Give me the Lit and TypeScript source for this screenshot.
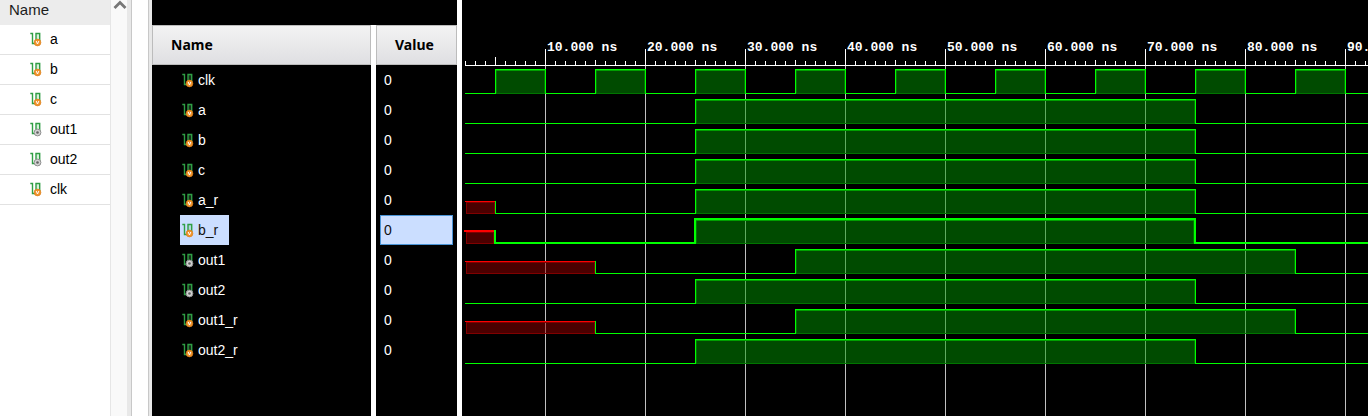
import { LitElement, html, svg, css } from "lit";
import { customElement, property, state } from "lit/decorators.js";

type Kind = "reg" | "out";
interface Pulse { from: number; to: number; }
interface Signal {
  name: string;
  kind: Kind;
  value: string;
  high: Pulse[];
  unknownUntil?: number;
  selected?: boolean;
}

const NS = 10; // pixels per nanosecond
const ORIGIN = -17; // x of time zero inside the wave pane
const START = 3; // x where traces begin
const ROW = 30;
const AXIS = 65;

const early: Pulse[] = [{ from: 25, to: 75 }];
const late: Pulse[] = [{ from: 35, to: 85 }];

const clock = (end: number): Pulse[] => {
  const pulses: Pulse[] = [];
  for (let t = 5; t <= end; t += 10) pulses.push({ from: t, to: t + 5 });
  return pulses;
};

const SIGNALS: Signal[] = [
  { name: "clk", kind: "reg", value: "0", high: [] },
  { name: "a", kind: "reg", value: "0", high: early },
  { name: "b", kind: "reg", value: "0", high: early },
  { name: "c", kind: "reg", value: "0", high: early },
  { name: "a_r", kind: "reg", value: "0", high: early, unknownUntil: 5 },
  { name: "b_r", kind: "reg", value: "0", high: early, unknownUntil: 5, selected: true },
  { name: "out1", kind: "out", value: "0", high: late, unknownUntil: 15 },
  { name: "out2", kind: "out", value: "0", high: early },
  { name: "out1_r", kind: "reg", value: "0", high: late, unknownUntil: 15 },
  { name: "out2_r", kind: "reg", value: "0", high: early },
];

const OBJECTS: { name: string; kind: Kind }[] = [
  { name: "a", kind: "reg" },
  { name: "b", kind: "reg" },
  { name: "c", kind: "reg" },
  { name: "out1", kind: "out" },
  { name: "out2", kind: "out" },
  { name: "clk", kind: "reg" },
];

const timeX = (t: number) => ORIGIN + t * NS;

@customElement("signal-icon")
export class SignalIcon extends LitElement {
  @property() kind: Kind = "reg";

  static styles = css`
    :host { display: block; width: 12px; height: 15px; flex: none; }
    svg { display: block; }
    .wire { fill: none; stroke: #2f9e44; stroke-width: 1.4; }
    .tint { fill: #5fbf70; fill-opacity: 0.25; }
    .reg { fill: #f0932b; stroke: #d87a16; stroke-width: 0.6; }
    .vee { fill: none; stroke: #fff; stroke-width: 1; }
    .out { fill: #d2d2d2; stroke: #909090; stroke-width: 1; }
    .dot { fill: #606060; }
  `;

  render() {
    return html`<svg width="12" height="15" viewBox="0 0 12 15" aria-hidden="true">
      <rect class="tint" x="6" y="1" width="4" height="9"></rect>
      <path class="wire" d="M0.3 1.5H2.5V11.5H6V1.5H9.7V9"></path>
      ${this.kind === "reg"
        ? svg`<circle class="reg" cx="7.5" cy="10.5" r="3.4"></circle>
              <path class="vee" d="M6.2 9L7.5 12L8.8 9"></path>`
        : svg`<circle class="out" cx="7.5" cy="10.5" r="3.4"></circle>
              <circle class="dot" cx="7.5" cy="10.5" r="1.3"></circle>`}
    </svg>`;
  }
}

@customElement("objects-panel")
export class ObjectsPanel extends LitElement {
  static styles = css`
    :host { display: flex; flex: none; width: 132px; box-sizing: border-box; border-right: 1px solid #c8c8c8; background: #fff; }
    table { width: 110px; border-collapse: collapse; align-self: flex-start; }
    th, td { padding: 0; text-align: left; font-weight: normal; }
    th { height: 25px; box-sizing: border-box; padding: 0 0 5px 9px; background: #ececec; font-size: 15px; line-height: 20px; color: #1c1c1c; }
    .cell { display: flex; gap: 8px; align-items: center; height: 29px; box-sizing: border-box; padding: 0 0 1px 30px; }
    td { border-bottom: 1px solid #e2e2e2; }
    .track { width: 17px; box-sizing: border-box; border-left: 1px solid #e6e6e6; background: #f9f9f9; }
    .edge { width: 4px; background: #e8e8e8; }
    .up { display: block; width: 16px; height: 16px; padding: 0; border: 0; background: none; }
    .up svg { display: block; }
    .up path { fill: none; stroke: #777; stroke-width: 2.8; }
  `;

  render() {
    return html`
      <table>
        <thead><tr><th scope="col">Name</th></tr></thead>
        <tbody>
          ${OBJECTS.map((o) => html`<tr><td><div class="cell"><signal-icon .kind=${o.kind}></signal-icon>${o.name}</div></td></tr>`)}
        </tbody>
      </table>
      <div class="track">
        <button class="up" aria-label="Scroll up">
          <svg width="16" height="16" viewBox="0 0 16 16"><path d="M3.5 8L9 2.5L14.5 8"></path></svg>
        </button>
      </div>
      <div class="edge"></div>
    `;
  }
}

@customElement("signal-table")
export class SignalTable extends LitElement {
  static styles = css`
    :host { display: block; flex: none; width: 305px; box-sizing: border-box; padding-top: 25px; background: #000; color: #fff; }
    table { width: 100%; height: 100%; border-collapse: separate; border-spacing: 0; table-layout: fixed; }
    th, td { padding: 0; text-align: left; }
    .name { width: 219px; border-right: 5px solid #fff; }
    .head { height: 40px; box-sizing: border-box; border: 1px solid #bcbcbc; padding-left: 18px;
      background: linear-gradient(#f3f3f3, #dfdfe2); color: #000; font: bold 14px/38px "Noto Sans", "Open Sans", sans-serif; }
    .row { height: 30px; }
    .label { display: flex; gap: 4px; align-items: center; width: max-content; height: 30px; margin-left: 28px; padding: 0 11px 0 2px; }
    .value { height: 30px; box-sizing: border-box; margin: 0 4px; padding-left: 4px; line-height: 30px; }
    .selected .label { background: #cbdeff; color: #111; }
    .selected .value { border: 1px solid #4a94d6; padding-left: 3px; line-height: 28px; background: #cbdeff; color: #111; }
  `;

  render() {
    return html`<table>
      <thead>
        <tr>
          <th class="name" scope="col"><div class="head">Name</div></th>
          <th scope="col"><div class="head">Value</div></th>
        </tr>
      </thead>
      <tbody>
        ${SIGNALS.map((s) => html`<tr class=${s.selected ? "row selected" : "row"}>
          <td class="name"><div class="label"><signal-icon .kind=${s.kind}></signal-icon>${s.name}</div></td>
          <td><div class="value">${s.value}</div></td>
        </tr>`)}
        <tr><td class="name"></td><td></td></tr>
      </tbody>
    </table>`;
  }
}

@customElement("wave-view")
export class WaveView extends LitElement {
  @state() private end = 90;
  private observer?: ResizeObserver;

  static styles = css`
    :host { display: block; flex: 1; min-width: 0; overflow: hidden; background: #000; border-left: 5px solid #fff; }
    svg { display: block; width: 100%; height: 100%; shape-rendering: crispEdges; }
    .axis { fill: #fff; }
    .grid { fill: #c0c0c0; }
    .time { fill: #fff; font: bold 13px "Liberation Mono", monospace; }
    .fill { fill: #009600; fill-opacity: 0.5; }
    .shade { fill: #00a000; }
    .rim { fill: #007a00; fill-opacity: 0.9; }
    .on { fill: #00ff00; }
    .bad { fill: #960000; fill-opacity: 0.5; }
    .badrim { fill: #800000; }
    .badtop { fill: #ff0000; }
  `;

  connectedCallback() {
    super.connectedCallback();
    this.observer = new ResizeObserver(() => {
      this.end = Math.floor((this.clientWidth - ORIGIN) / NS);
    });
    this.observer.observe(this);
  }

  disconnectedCallback() {
    super.disconnectedCallback();
    this.observer?.disconnect();
  }

  private ruler() {
    const parts = [];
    for (let t = 2; t <= this.end; t++) {
      const x = timeX(t);
      const major = t % 10 === 0;
      const h = major ? 16 : t === 5 ? 8 : t % 5 === 0 ? 5 : 4;
      parts.push(svg`<rect class="axis" x=${x} y=${AXIS - h} width="1" height=${h}></rect>`);
      if (major) {
        parts.push(svg`<rect class="grid" x=${x} y=${AXIS + 1} width="1" height="100%"></rect>
          <text class="time" x=${x + 2} y="51">${t}.000 ns</text>`);
      }
    }
    parts.push(svg`<rect class="axis" x=${START} y=${AXIS} width="100%" height="1"></rect>`);
    return parts;
  }

  private trace(s: Signal, row: number) {
    const w = s.selected ? 2 : 1;
    const d = w - 1;
    const top = AXIS + row * ROW + 4;
    const base = top + 24;
    const pulses = s.name === "clk" ? clock(this.end) : s.high;
    const parts = [];
    let x = START;
    if (s.unknownUntil !== undefined) {
      const end = timeX(s.unknownUntil);
      const mid = base - 12;
      parts.push(svg`<rect class="bad" x=${x + 1} y=${mid + 1} width=${end - x - 1} height="12"></rect>
        <rect class="badrim" x=${x + 1} y=${mid + 1} width=${end - x - 1} height="1"></rect>
        <rect class="badrim" x=${x + 1} y=${base} width=${end - x - 1} height="1"></rect>
        <rect class="badrim" x=${x + 1} y=${mid + 1} width="1" height="12"></rect>
        <rect class="badrim" x=${end - 1 - d} y=${mid + 1} width="1" height="12"></rect>
        <rect class="badtop" x=${x - d} y=${mid - d} width=${end - x + d} height=${w}></rect>
        <rect class="on" x=${end - d} y=${mid - d} width=${w} height=${13 + d}></rect>`);
      x = end;
    }
    for (const p of pulses) {
      const a = timeX(p.from);
      const b = timeX(p.to);
      parts.push(svg`<rect class="on" x=${x} y=${base - d} width=${a - x} height=${w}></rect>
        <rect class="fill" x=${a + 1} y=${top + 1} width=${b - a - 1} height="24"></rect>
        <rect class="rim" x=${a + 1} y=${base} width=${b - a - 1} height="1"></rect>
        <rect class="rim" x=${a + 1} y=${top + 1} width="1" height="24"></rect>
        <rect class="rim" x=${b - 1 - d} y=${top + 1} width="1" height="24"></rect>
        <rect class="shade" x=${a + 1} y=${top + 1} width=${b - a - 1} height="1"></rect>
        <rect class="on" x=${a - d} y=${top - d} width=${b - a + 1 + d} height=${w}></rect>
        <rect class="on" x=${a - d} y=${top - d} width=${w} height=${25 + d}></rect>
        <rect class="on" x=${b - d} y=${top - d} width=${w} height=${25 + d}></rect>`);
      x = b;
    }
    parts.push(svg`<rect class="on" x=${x} y=${base - d} width="100%" height=${w}></rect>`);
    return parts;
  }

  render() {
    return html`<svg role="img" aria-label="Waveforms">${this.ruler()}${SIGNALS.map((s, i) => this.trace(s, i))}</svg>`;
  }
}

@customElement("app-root")
export class AppRoot extends LitElement {
  static styles = css`
    :host { display: flex; height: 100vh; overflow: hidden; background: #fff; color: #000; font: 14px/20px "Liberation Sans", Arial, sans-serif; }
    .gutter { flex: none; width: 20px; box-sizing: border-box; border-right: 3px solid #e8e8e8; }
    .rule { height: 100%; box-sizing: border-box; border-right: 1px solid #c8c8c8; }
  `;

  render() {
    return html`
      <objects-panel></objects-panel>
      <div class="gutter"><div class="rule"></div></div>
      <signal-table></signal-table>
      <wave-view></wave-view>
    `;
  }
}
